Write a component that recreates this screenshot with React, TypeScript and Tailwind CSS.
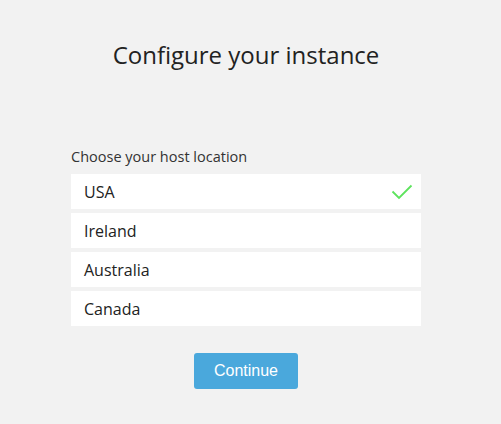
import { useState } from "react";

const locations = ["USA", "Ireland", "Australia", "Canada"];

export default function App() {
  const [selected, setSelected] = useState("USA");

  return (
    <div
      className="min-h-[424px] w-full bg-[#f2f2f2] text-[#222]"
      style={{ fontFamily: '"Open Sans", "Noto Sans", sans-serif' }}
    >
      <div className="ml-[71px] flex w-[350px] flex-col pt-[37px]">
        <h1 className="text-center text-[24px] font-normal leading-[36px] text-[#222]">
          Configure your instance
        </h1>

        <p className="mt-[74px] text-[14.5px] leading-[20px] text-[#333]">
          Choose your host location
        </p>

        <div className="mt-[7px] flex flex-col gap-[4px]">
          {locations.map((loc) => (
            <button
              key={loc}
              onClick={() => setSelected(loc)}
              className="flex h-[35px] items-center justify-between bg-white pl-[13px] pr-[8px] text-left text-[16px] text-[#222]"
            >
              <span>{loc}</span>
              {selected === loc && (
                <svg width="22" height="16" viewBox="0 0 22 16" fill="none">
                  <path
                    d="M1.5 7.5 L8 14 L20.5 1.5"
                    stroke="#5de35d"
                    strokeWidth="1.8"
                  />
                </svg>
              )}
            </button>
          ))}
        </div>

        <div className="mt-[27px] flex justify-center">
          <button
            className="h-[36px] w-[104px] rounded-[3px] bg-[#4aa8dc] text-[16px] text-white"
            style={{ fontFamily: '"Liberation Sans", Arial, sans-serif' }}
          >
            Continue
          </button>
        </div>
      </div>
    </div>
  );
}
